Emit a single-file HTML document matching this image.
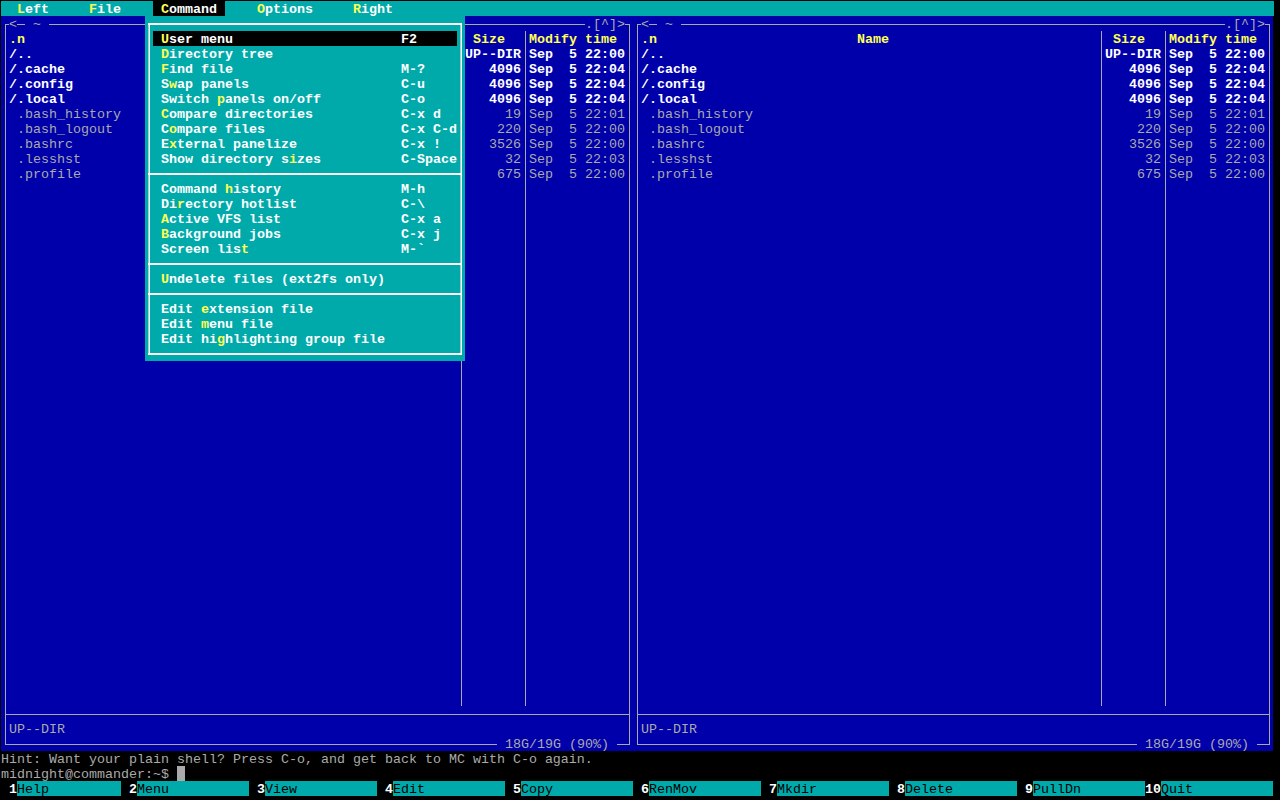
<!DOCTYPE html>
<html><head><meta charset="utf-8"><style>
html,body{margin:0;padding:0;background:#000;}
body{width:1280px;height:800px;position:relative;overflow:hidden;}
div{position:absolute;}
.t{font-family:"Liberation Mono",monospace;font-size:13.333px;line-height:15px;height:15px;white-space:pre;}
.b{font-weight:bold;}
</style></head><body>
<div style="left:1px;top:1px;width:1273px;height:15px;background:#00aaaa"></div>
<div style="left:1px;top:16px;width:1272px;height:735px;background:#0000aa"></div>
<div style="left:5px;top:24px;width:4px;height:1px;background:#aaaaaa"></div>
<div class="t" style="left:9px;top:17px;color:#aaaaaa">&lt;</div>
<div style="left:17px;top:24px;width:8px;height:1px;background:#aaaaaa"></div>
<div class="t" style="left:33px;top:17px;color:#aaaaaa">~</div>
<div style="left:49px;top:24px;width:536px;height:1px;background:#aaaaaa"></div>
<div class="t" style="left:585px;top:17px;color:#aaaaaa">.[^]&gt;</div>
<div style="left:625px;top:24px;width:5px;height:1px;background:#aaaaaa"></div>
<div style="left:5px;top:24px;width:1px;height:721px;background:#aaaaaa"></div>
<div style="left:629px;top:24px;width:1px;height:721px;background:#aaaaaa"></div>
<div style="left:461px;top:31px;width:1px;height:675px;background:#aaaaaa"></div>
<div style="left:525px;top:31px;width:1px;height:675px;background:#aaaaaa"></div>
<div style="left:5px;top:714px;width:625px;height:1px;background:#aaaaaa"></div>
<div class="t" style="left:9px;top:722px;color:#aaaaaa">UP--DIR</div>
<div style="left:5px;top:744px;width:492px;height:1px;background:#aaaaaa"></div>
<div class="t" style="left:497px;top:737px;color:#aaaaaa"> 18G/19G (90%) </div>
<div style="left:617px;top:744px;width:13px;height:1px;background:#aaaaaa"></div>
<div class="t b" style="left:9px;top:32px;color:#ffff55">.n</div>
<div class="t b" style="left:217px;top:32px;color:#ffff55">Name</div>
<div class="t b" style="left:473px;top:32px;color:#ffff55">Size</div>
<div class="t b" style="left:529px;top:32px;color:#ffff55">Modify time</div>
<div class="t b" style="left:9px;top:47px;color:#ffffff">/..</div>
<div class="t b" style="left:465px;top:47px;color:#ffffff">UP--DIR</div>
<div class="t b" style="left:529px;top:47px;color:#ffffff">Sep  5 22:00</div>
<div class="t b" style="left:9px;top:62px;color:#ffffff">/.cache</div>
<div class="t b" style="left:489px;top:62px;color:#ffffff">4096</div>
<div class="t b" style="left:529px;top:62px;color:#ffffff">Sep  5 22:04</div>
<div class="t b" style="left:9px;top:77px;color:#ffffff">/.config</div>
<div class="t b" style="left:489px;top:77px;color:#ffffff">4096</div>
<div class="t b" style="left:529px;top:77px;color:#ffffff">Sep  5 22:04</div>
<div class="t b" style="left:9px;top:92px;color:#ffffff">/.local</div>
<div class="t b" style="left:489px;top:92px;color:#ffffff">4096</div>
<div class="t b" style="left:529px;top:92px;color:#ffffff">Sep  5 22:04</div>
<div class="t" style="left:9px;top:107px;color:#aaaaaa"> .bash_history</div>
<div class="t" style="left:505px;top:107px;color:#aaaaaa">19</div>
<div class="t" style="left:529px;top:107px;color:#aaaaaa">Sep  5 22:01</div>
<div class="t" style="left:9px;top:122px;color:#aaaaaa"> .bash_logout</div>
<div class="t" style="left:497px;top:122px;color:#aaaaaa">220</div>
<div class="t" style="left:529px;top:122px;color:#aaaaaa">Sep  5 22:00</div>
<div class="t" style="left:9px;top:137px;color:#aaaaaa"> .bashrc</div>
<div class="t" style="left:489px;top:137px;color:#aaaaaa">3526</div>
<div class="t" style="left:529px;top:137px;color:#aaaaaa">Sep  5 22:00</div>
<div class="t" style="left:9px;top:152px;color:#aaaaaa"> .lesshst</div>
<div class="t" style="left:505px;top:152px;color:#aaaaaa">32</div>
<div class="t" style="left:529px;top:152px;color:#aaaaaa">Sep  5 22:03</div>
<div class="t" style="left:9px;top:167px;color:#aaaaaa"> .profile</div>
<div class="t" style="left:497px;top:167px;color:#aaaaaa">675</div>
<div class="t" style="left:529px;top:167px;color:#aaaaaa">Sep  5 22:00</div>
<div style="left:637px;top:24px;width:4px;height:1px;background:#aaaaaa"></div>
<div class="t" style="left:641px;top:17px;color:#aaaaaa">&lt;</div>
<div style="left:649px;top:24px;width:8px;height:1px;background:#aaaaaa"></div>
<div class="t" style="left:665px;top:17px;color:#aaaaaa">~</div>
<div style="left:681px;top:24px;width:544px;height:1px;background:#aaaaaa"></div>
<div class="t" style="left:1225px;top:17px;color:#aaaaaa">.[^]&gt;</div>
<div style="left:1265px;top:24px;width:5px;height:1px;background:#aaaaaa"></div>
<div style="left:637px;top:24px;width:1px;height:721px;background:#aaaaaa"></div>
<div style="left:1269px;top:24px;width:1px;height:721px;background:#aaaaaa"></div>
<div style="left:1101px;top:31px;width:1px;height:675px;background:#aaaaaa"></div>
<div style="left:1165px;top:31px;width:1px;height:675px;background:#aaaaaa"></div>
<div style="left:637px;top:714px;width:633px;height:1px;background:#aaaaaa"></div>
<div class="t" style="left:641px;top:722px;color:#aaaaaa">UP--DIR</div>
<div style="left:637px;top:744px;width:500px;height:1px;background:#aaaaaa"></div>
<div class="t" style="left:1137px;top:737px;color:#aaaaaa"> 18G/19G (90%) </div>
<div style="left:1257px;top:744px;width:13px;height:1px;background:#aaaaaa"></div>
<div class="t b" style="left:641px;top:32px;color:#ffff55">.n</div>
<div class="t b" style="left:857px;top:32px;color:#ffff55">Name</div>
<div class="t b" style="left:1113px;top:32px;color:#ffff55">Size</div>
<div class="t b" style="left:1169px;top:32px;color:#ffff55">Modify time</div>
<div class="t b" style="left:641px;top:47px;color:#ffffff">/..</div>
<div class="t b" style="left:1105px;top:47px;color:#ffffff">UP--DIR</div>
<div class="t b" style="left:1169px;top:47px;color:#ffffff">Sep  5 22:00</div>
<div class="t b" style="left:641px;top:62px;color:#ffffff">/.cache</div>
<div class="t b" style="left:1129px;top:62px;color:#ffffff">4096</div>
<div class="t b" style="left:1169px;top:62px;color:#ffffff">Sep  5 22:04</div>
<div class="t b" style="left:641px;top:77px;color:#ffffff">/.config</div>
<div class="t b" style="left:1129px;top:77px;color:#ffffff">4096</div>
<div class="t b" style="left:1169px;top:77px;color:#ffffff">Sep  5 22:04</div>
<div class="t b" style="left:641px;top:92px;color:#ffffff">/.local</div>
<div class="t b" style="left:1129px;top:92px;color:#ffffff">4096</div>
<div class="t b" style="left:1169px;top:92px;color:#ffffff">Sep  5 22:04</div>
<div class="t" style="left:641px;top:107px;color:#aaaaaa"> .bash_history</div>
<div class="t" style="left:1145px;top:107px;color:#aaaaaa">19</div>
<div class="t" style="left:1169px;top:107px;color:#aaaaaa">Sep  5 22:01</div>
<div class="t" style="left:641px;top:122px;color:#aaaaaa"> .bash_logout</div>
<div class="t" style="left:1137px;top:122px;color:#aaaaaa">220</div>
<div class="t" style="left:1169px;top:122px;color:#aaaaaa">Sep  5 22:00</div>
<div class="t" style="left:641px;top:137px;color:#aaaaaa"> .bashrc</div>
<div class="t" style="left:1129px;top:137px;color:#aaaaaa">3526</div>
<div class="t" style="left:1169px;top:137px;color:#aaaaaa">Sep  5 22:00</div>
<div class="t" style="left:641px;top:152px;color:#aaaaaa"> .lesshst</div>
<div class="t" style="left:1145px;top:152px;color:#aaaaaa">32</div>
<div class="t" style="left:1169px;top:152px;color:#aaaaaa">Sep  5 22:03</div>
<div class="t" style="left:641px;top:167px;color:#aaaaaa"> .profile</div>
<div class="t" style="left:1137px;top:167px;color:#aaaaaa">675</div>
<div class="t" style="left:1169px;top:167px;color:#aaaaaa">Sep  5 22:00</div>
<div class="t b" style="left:17px;top:2px;color:#ffff55">L</div>
<div class="t b" style="left:25px;top:2px;color:#ffffff">eft</div>
<div class="t b" style="left:89px;top:2px;color:#ffff55">F</div>
<div class="t b" style="left:97px;top:2px;color:#ffffff">ile</div>
<div class="t b" style="left:257px;top:2px;color:#ffff55">O</div>
<div class="t b" style="left:265px;top:2px;color:#ffffff">ptions</div>
<div class="t b" style="left:353px;top:2px;color:#ffff55">R</div>
<div class="t b" style="left:361px;top:2px;color:#ffffff">ight</div>
<div style="left:153px;top:1px;width:72px;height:15px;background:#000000"></div>
<div class="t b" style="left:161px;top:2px;color:#ffff55">C</div>
<div class="t b" style="left:169px;top:2px;color:#ffffff">ommand</div>
<div style="left:145px;top:16px;width:320px;height:345px;background:#00aaaa"></div>
<div style="left:148px;top:23px;width:314px;height:2px;background:#ffffff"></div>
<div style="left:148px;top:353px;width:314px;height:2px;background:#ffffff"></div>
<div style="left:148px;top:23px;width:1px;height:331px;background:rgba(255,255,255,0.55)"></div>
<div style="left:149px;top:23px;width:1px;height:331px;background:#ffffff"></div>
<div style="left:460px;top:23px;width:1px;height:331px;background:rgba(255,255,255,0.55)"></div>
<div style="left:461px;top:23px;width:1px;height:331px;background:#ffffff"></div>
<div style="left:148px;top:173px;width:314px;height:2px;background:#ffffff"></div>
<div style="left:148px;top:263px;width:314px;height:2px;background:#ffffff"></div>
<div style="left:148px;top:293px;width:314px;height:2px;background:#ffffff"></div>
<div style="left:153px;top:31px;width:304px;height:15px;background:#000000"></div>
<div class="t b" style="left:161px;top:32px;color:#ffff55">U</div>
<div class="t b" style="left:169px;top:32px;color:#ffffff">ser menu</div>
<div class="t b" style="left:401px;top:32px;color:#ffffff">F2</div>
<div class="t b" style="left:161px;top:47px;color:#ffff55">D</div>
<div class="t b" style="left:169px;top:47px;color:#ffffff">irectory tree</div>
<div class="t b" style="left:161px;top:62px;color:#ffff55">F</div>
<div class="t b" style="left:169px;top:62px;color:#ffffff">ind file</div>
<div class="t b" style="left:401px;top:62px;color:#ffffff">M-?</div>
<div class="t b" style="left:161px;top:77px;color:#ffffff">S</div>
<div class="t b" style="left:169px;top:77px;color:#ffff55">w</div>
<div class="t b" style="left:177px;top:77px;color:#ffffff">ap panels</div>
<div class="t b" style="left:401px;top:77px;color:#ffffff">C-u</div>
<div class="t b" style="left:161px;top:92px;color:#ffffff">Switch </div>
<div class="t b" style="left:217px;top:92px;color:#ffff55">p</div>
<div class="t b" style="left:225px;top:92px;color:#ffffff">anels on/off</div>
<div class="t b" style="left:401px;top:92px;color:#ffffff">C-o</div>
<div class="t b" style="left:161px;top:107px;color:#ffff55">C</div>
<div class="t b" style="left:169px;top:107px;color:#ffffff">ompare directories</div>
<div class="t b" style="left:401px;top:107px;color:#ffffff">C-x d</div>
<div class="t b" style="left:161px;top:122px;color:#ffffff">C</div>
<div class="t b" style="left:169px;top:122px;color:#ffff55">o</div>
<div class="t b" style="left:177px;top:122px;color:#ffffff">mpare files</div>
<div class="t b" style="left:401px;top:122px;color:#ffffff">C-x C-d</div>
<div class="t b" style="left:161px;top:137px;color:#ffffff">E</div>
<div class="t b" style="left:169px;top:137px;color:#ffff55">x</div>
<div class="t b" style="left:177px;top:137px;color:#ffffff">ternal panelize</div>
<div class="t b" style="left:401px;top:137px;color:#ffffff">C-x !</div>
<div class="t b" style="left:161px;top:152px;color:#ffffff">Show directory s</div>
<div class="t b" style="left:289px;top:152px;color:#ffff55">i</div>
<div class="t b" style="left:297px;top:152px;color:#ffffff">zes</div>
<div class="t b" style="left:401px;top:152px;color:#ffffff">C-Space</div>
<div class="t b" style="left:161px;top:182px;color:#ffffff">Command </div>
<div class="t b" style="left:225px;top:182px;color:#ffff55">h</div>
<div class="t b" style="left:233px;top:182px;color:#ffffff">istory</div>
<div class="t b" style="left:401px;top:182px;color:#ffffff">M-h</div>
<div class="t b" style="left:161px;top:197px;color:#ffffff">Di</div>
<div class="t b" style="left:177px;top:197px;color:#ffff55">r</div>
<div class="t b" style="left:185px;top:197px;color:#ffffff">ectory hotlist</div>
<div class="t b" style="left:401px;top:197px;color:#ffffff">C-\</div>
<div class="t b" style="left:161px;top:212px;color:#ffff55">A</div>
<div class="t b" style="left:169px;top:212px;color:#ffffff">ctive VFS list</div>
<div class="t b" style="left:401px;top:212px;color:#ffffff">C-x a</div>
<div class="t b" style="left:161px;top:227px;color:#ffff55">B</div>
<div class="t b" style="left:169px;top:227px;color:#ffffff">ackground jobs</div>
<div class="t b" style="left:401px;top:227px;color:#ffffff">C-x j</div>
<div class="t b" style="left:161px;top:242px;color:#ffffff">Screen lis</div>
<div class="t b" style="left:241px;top:242px;color:#ffff55">t</div>
<div class="t b" style="left:401px;top:242px;color:#ffffff">M-`</div>
<div class="t b" style="left:161px;top:272px;color:#ffff55">U</div>
<div class="t b" style="left:169px;top:272px;color:#ffffff">ndelete files (ext2fs only)</div>
<div class="t b" style="left:161px;top:302px;color:#ffffff">Edit </div>
<div class="t b" style="left:201px;top:302px;color:#ffff55">e</div>
<div class="t b" style="left:209px;top:302px;color:#ffffff">xtension file</div>
<div class="t b" style="left:161px;top:317px;color:#ffffff">Edit </div>
<div class="t b" style="left:201px;top:317px;color:#ffff55">m</div>
<div class="t b" style="left:209px;top:317px;color:#ffffff">enu file</div>
<div class="t b" style="left:161px;top:332px;color:#ffffff">Edit hi</div>
<div class="t b" style="left:217px;top:332px;color:#ffff55">g</div>
<div class="t b" style="left:225px;top:332px;color:#ffffff">hlighting group file</div>
<div class="t" style="left:1px;top:752px;color:#aaaaaa">Hint: Want your plain shell? Press C-o, and get back to MC with C-o again.</div>
<div class="t" style="left:1px;top:767px;color:#aaaaaa">midnight@commander:~$</div>
<div style="left:177px;top:766px;width:8px;height:15px;background:#aaaaaa"></div>
<div style="left:17px;top:781px;width:104px;height:15px;background:#00aaaa"></div>
<div class="t b" style="left:9px;top:782px;color:#ffffff">1</div>
<div class="t" style="left:17px;top:782px;color:#000000">Help</div>
<div style="left:137px;top:781px;width:112px;height:15px;background:#00aaaa"></div>
<div class="t b" style="left:129px;top:782px;color:#ffffff">2</div>
<div class="t" style="left:137px;top:782px;color:#000000">Menu</div>
<div style="left:265px;top:781px;width:112px;height:15px;background:#00aaaa"></div>
<div class="t b" style="left:257px;top:782px;color:#ffffff">3</div>
<div class="t" style="left:265px;top:782px;color:#000000">View</div>
<div style="left:393px;top:781px;width:112px;height:15px;background:#00aaaa"></div>
<div class="t b" style="left:385px;top:782px;color:#ffffff">4</div>
<div class="t" style="left:393px;top:782px;color:#000000">Edit</div>
<div style="left:521px;top:781px;width:112px;height:15px;background:#00aaaa"></div>
<div class="t b" style="left:513px;top:782px;color:#ffffff">5</div>
<div class="t" style="left:521px;top:782px;color:#000000">Copy</div>
<div style="left:649px;top:781px;width:112px;height:15px;background:#00aaaa"></div>
<div class="t b" style="left:641px;top:782px;color:#ffffff">6</div>
<div class="t" style="left:649px;top:782px;color:#000000">RenMov</div>
<div style="left:777px;top:781px;width:112px;height:15px;background:#00aaaa"></div>
<div class="t b" style="left:769px;top:782px;color:#ffffff">7</div>
<div class="t" style="left:777px;top:782px;color:#000000">Mkdir</div>
<div style="left:905px;top:781px;width:112px;height:15px;background:#00aaaa"></div>
<div class="t b" style="left:897px;top:782px;color:#ffffff">8</div>
<div class="t" style="left:905px;top:782px;color:#000000">Delete</div>
<div style="left:1033px;top:781px;width:112px;height:15px;background:#00aaaa"></div>
<div class="t b" style="left:1025px;top:782px;color:#ffffff">9</div>
<div class="t" style="left:1033px;top:782px;color:#000000">PullDn</div>
<div style="left:1161px;top:781px;width:112px;height:15px;background:#00aaaa"></div>
<div class="t b" style="left:1145px;top:782px;color:#ffffff">10</div>
<div class="t" style="left:1161px;top:782px;color:#000000">Quit</div>
</body></html>
